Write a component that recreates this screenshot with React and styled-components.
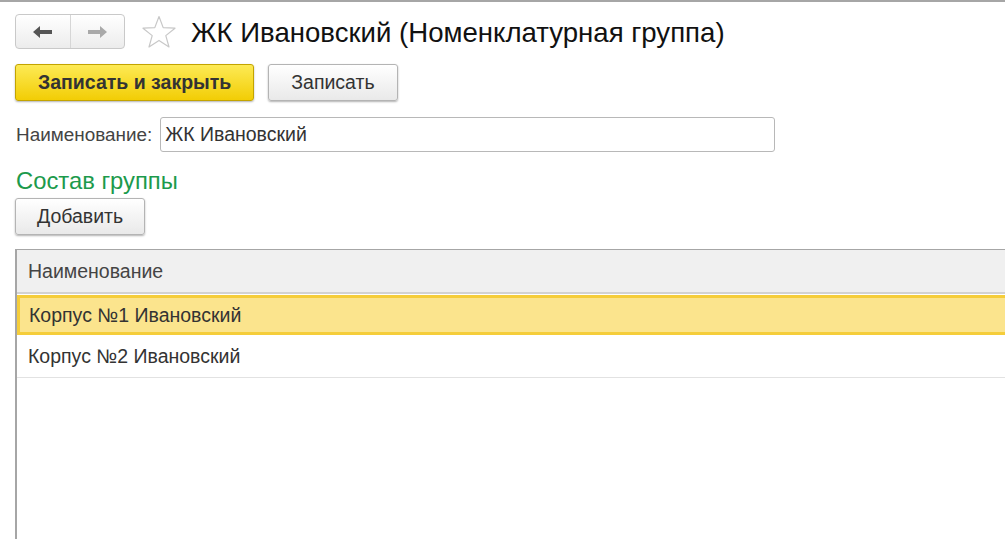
import React from 'react'
import styled, { createGlobalStyle } from 'styled-components'

const Global = createGlobalStyle`
  html, body { margin: 0; padding: 0; background: #fff; }
  body {
    font-family: "Liberation Sans", Arial, sans-serif;
    color: #333;
    overflow: hidden;
  }
`

const Page = styled.div`
  height: 539px;
  border-top: 2px solid #a6a6a6;
  box-sizing: border-box;
  padding-left: 15px;
  display: flex;
  flex-direction: column;
`

const Header = styled.div`
  display: flex;
  align-items: center;
  margin-top: 12px;
  height: 35px;
`

const NavGroup = styled.div`
  display: flex;
  width: 110px;
  height: 35px;
  box-sizing: border-box;
  border: 1px solid #c9c9c9;
  border-radius: 4px;
  background: linear-gradient(#ffffff, #ececec);
`

const NavHalf = styled.div`
  flex: 1;
  display: flex;
  align-items: center;
  justify-content: center;
  & + & { border-left: 1px solid #d6d6d6; }
`

const StarBox = styled.div`
  margin-left: 16px;
  width: 36px;
  height: 36px;
  display: flex;
  align-items: center;
`

const Title = styled.h1`
  margin: 2px 0 0 14px;
  font-size: 27.6px;
  font-weight: normal;
  color: #111;
  line-height: 35px;
`

const Toolbar = styled.div`
  display: flex;
  gap: 14px;
  margin-top: ${p => p.$top || 15}px;
`

const Button = styled.button`
  font-family: inherit;
  font-size: 19.5px;
  height: 37px;
  box-sizing: border-box;
  padding: 0 ${p => p.$pad || 22}px;
  border-radius: 3px;
  border: 1px solid ${p => (p.$primary ? '#c3a400' : '#b4b4b4')};
  background: ${p =>
    p.$primary
      ? 'linear-gradient(#fdea55, #f2cd05)'
      : 'linear-gradient(#ffffff, #e9e9e9)'};
  color: #333;
  font-weight: ${p => (p.$primary ? 'bold' : 'normal')};
  box-shadow: 0 1px 2px rgba(0, 0, 0, 0.3);
  cursor: pointer;
`

const FieldRow = styled.div`
  display: flex;
  align-items: center;
  margin-top: 16px;
  gap: 8px;
`

const Label = styled.span`
  font-size: 18.9px;
  color: #444;
  margin-left: 1px;
`

const Input = styled.div`
  width: 615px;
  height: 35px;
  box-sizing: border-box;
  border: 1px solid #b8b8b8;
  border-radius: 3px;
  padding: 0 4px;
  display: flex;
  align-items: center;
  font-size: 19.5px;
  color: #333;
`

const Section = styled.div`
  color: #1c9a4c;
  font-size: 23.8px;
  margin: 15px 0 0 1px;
  line-height: 27px;
`

const Grid = styled.div`
  margin-top: 14px;
  flex: 1;
  border-left: 2px solid #a6a6a6;
  border-top: 1px solid #a6a6a6;
  display: flex;
  flex-direction: column;
`

const HeadCell = styled.div`
  height: 42px;
  background: #f0f0f0;
  border-bottom: 2px solid #d2d2d2;
  display: flex;
  align-items: center;
  padding-left: 11px;
  font-size: 19.5px;
  color: #444;
`

const Row = styled.div`
  height: ${p => (p.$selected ? 40 : 43)}px;
  box-sizing: border-box;
  display: flex;
  align-items: center;
  padding-left: ${p => (p.$selected ? 9 : 11)}px;
  font-size: 19.5px;
  color: #333;
  margin-top: ${p => (p.$selected ? 1 : 0)}px;
  background: ${p => (p.$selected ? '#fbe48d' : '#fff')};
  border: ${p => (p.$selected ? '3px solid #f5cd3a' : 'none')};
  border-bottom: ${p => (p.$selected ? '3px solid #f5cd3a' : '1px solid #e2e2e2')};
  border-right: none;
`

const Arrow = ({ dir, color }) => (
  <svg width="22" height="14" viewBox="0 0 22 14">
    <g transform={dir === 'right' ? 'translate(22 0) scale(-1 1)' : undefined}>
      <path d="M1 7 L8 1 L8 5 L20 5 L20 9 L8 9 L8 13 Z" fill={color} />
    </g>
  </svg>
)

const Star = () => (
  <svg width="36" height="34" viewBox="0 0 36 34">
    <path
      d="M18 1.5 L22.2 12.6 L34 13.2 L24.8 20.6 L28 32 L18 25.4 L8 32 L11.2 20.6 L2 13.2 L13.8 12.6 Z"
      fill="none"
      stroke="#c8c8c8"
      strokeWidth="1.2"
      strokeLinejoin="round"
    />
  </svg>
)

const rows = ['Корпус №1 Ивановский', 'Корпус №2 Ивановский']

export default function App() {
  return (
    <>
      <Global />
      <Page>
        <Header>
          <NavGroup>
            <NavHalf><Arrow dir="left" color="#555" /></NavHalf>
            <NavHalf><Arrow dir="right" color="#a9a9a9" /></NavHalf>
          </NavGroup>
          <StarBox><Star /></StarBox>
          <Title>ЖК Ивановский (Номенклатурная группа)</Title>
        </Header>
        <Toolbar>
          <Button $primary $pad={22}>Записать и закрыть</Button>
          <Button $pad={22}>Записать</Button>
        </Toolbar>
        <FieldRow>
          <Label>Наименование:</Label>
          <Input>ЖК Ивановский</Input>
        </FieldRow>
        <Section>Состав группы</Section>
        <Toolbar $top={4}>
          <Button $pad={21}>Добавить</Button>
        </Toolbar>
        <Grid>
          <HeadCell>Наименование</HeadCell>
          {rows.map((r, i) => (
            <Row key={r} $selected={i === 0}>{r}</Row>
          ))}
        </Grid>
      </Page>
    </>
  )
}
